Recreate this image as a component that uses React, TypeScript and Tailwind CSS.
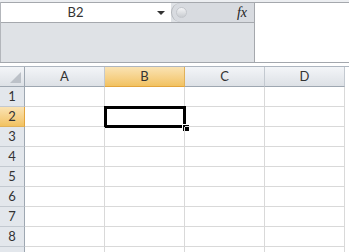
import React from 'react'

const cols = ['A', 'B', 'C', 'D']
const rows = [1, 2, 3, 4, 5, 6, 7, 8, 9]

export default function App() {
  return (
    <div className="w-[349px] h-[252px] overflow-hidden bg-white font-['Lato','Liberation_Sans',sans-serif] text-[#333]">
      {/* Name box + formula bar */}
      <div className="h-[2px] bg-[#eceef1]" />
      <div className="flex h-[61px] border-b border-[#a3a7ad]">
        <div className="w-[254px] flex flex-col bg-[#dfe2e6] border-l border-[#b3b6bb]">
          <div className="flex h-[21px] border-t border-b border-[#a5a8ad]">
            <div className="w-[170px] bg-white flex items-center relative">
              <span className="flex-1 text-center text-[13px] pr-[21px]">B2</span>
              <span className="absolute left-[156px] top-[8px] w-0 h-0 border-l-[4px] border-r-[4px] border-t-[4px] border-l-transparent border-r-transparent border-t-[#333]" />
            </div>
            <div className="flex-1 flex items-center bg-[#d8dbe0] rounded-l-full border-l border-[#b3b6bb] relative">
              <span className="absolute left-[4px] top-[4px] w-[11px] h-[11px] rounded-full bg-gradient-to-b from-[#f4f5f7] to-[#c9ccd1] border border-[#c4c7cc]" />
              <span className="ml-auto mr-[7px] font-['Liberation_Serif',serif] italic text-[14px] text-[#222]">fx</span>
            </div>
          </div>
          <div className="flex-1" />
        </div>
        <div className="flex-1 bg-white border-l border-t border-[#a5a8ad]" />
      </div>
      <div className="h-[3px] bg-white" />

      {/* Grid */}
      <div className="border-t border-[#aeb6c0]">
        <div className="flex h-[20px]">
          <div className="w-[25px] shrink-0 bg-gradient-to-b from-[#f3f5f8] to-[#dde1e6] border-r border-b border-[#9ea7b1] flex items-end justify-end pr-[3px] pb-[3px]">
            <svg width="11" height="11" viewBox="0 0 11 11">
              <polygon points="11,0 11,11 0,11" fill="#bcc1c8" />
            </svg>
          </div>
          {cols.map(c => (
            <div
              key={c}
              className={`w-[80px] shrink-0 flex items-center justify-center text-[13px] border-r border-b ${
                c === 'B'
                  ? 'bg-gradient-to-b from-[#fae3b3] to-[#f2c260] border-r-[#e0b15a] border-b-[#e2a43c]'
                  : 'bg-gradient-to-b from-[#f3f5f8] to-[#dde1e6] border-r-[#c3c9d0] border-b-[#9ea7b1]'
              }`}
            >
              {c}
            </div>
          ))}
        </div>
        {rows.map(r => (
          <div key={r} className="flex h-[20px]">
            <div
              className={`w-[25px] shrink-0 flex items-center justify-center text-[13px] border-r border-b ${
                r === 2
                  ? 'bg-gradient-to-b from-[#fae3b3] to-[#f2c260] border-r-[#e2a43c] border-b-[#e0b15a]'
                  : 'bg-[#e3e7ec] border-r-[#9ea7b1] border-b-[#c3c9d0]'
              }`}
            >
              {r < 9 ? r : ''}
            </div>
            {cols.map(c => (
              <div key={c} className="w-[80px] shrink-0 border-r border-b border-[#d9d9d9] relative">
                {r === 2 && c === 'B' && (
                  <>
                    {/* active cell + fill handle */}
                    <div className="absolute left-[-1px] top-[-1px] w-[82px] h-[22px] border-[3px] border-black" />
                    <div className="absolute left-[78px] top-[18px] w-[6px] h-[6px] bg-black outline outline-1 outline-white" />
                  </>
                )}
              </div>
            ))}
          </div>
        ))}
      </div>
    </div>
  )
}
